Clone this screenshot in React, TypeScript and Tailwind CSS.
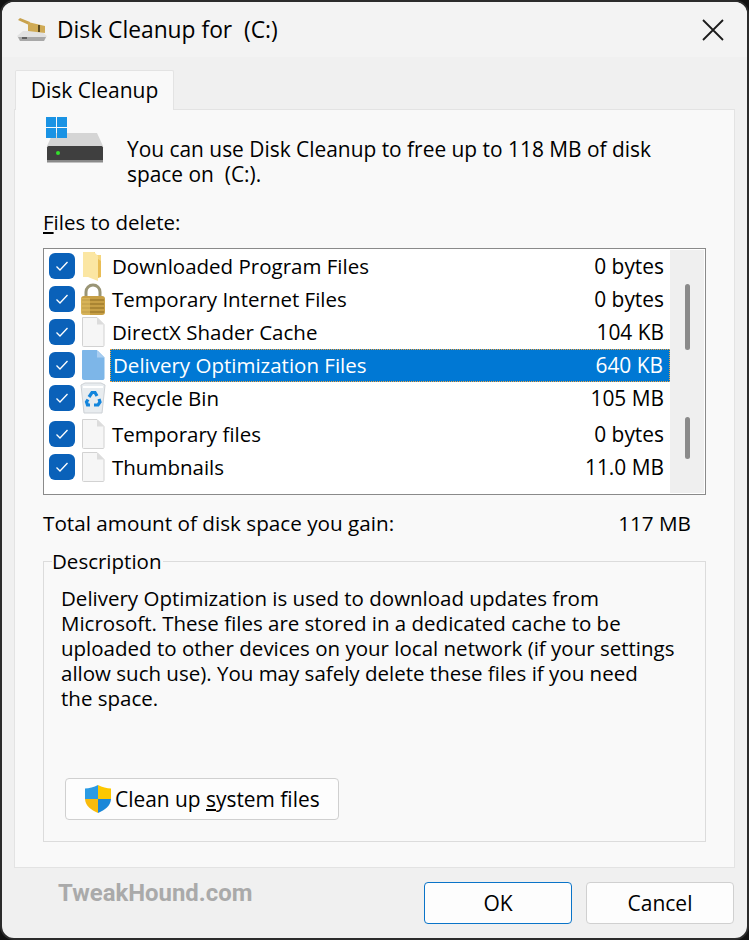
import React from "react";

const font = "font-['Open_Sans','Noto_Sans',sans-serif]";

const FileIcon = ({ blue }: { blue?: boolean }) => (
  <svg width="24" height="30" viewBox="0 0 24 30">
    <path d="M1.5 .5H16L23 7.5V28.5a1 1 0 0 1-1 1H2.5a1 1 0 0 1-1-1Z" fill={blue ? "#7db6e8" : "#f6f6f6"} stroke={blue ? "#7db6e8" : "#d2d2d2"} />
    <path d="M16 .5V7.5H23Z" fill={blue ? "#a9cdf0" : "#dcdcdc"} />
  </svg>
);

const FolderIcon = () => (
  <svg width="24" height="30" viewBox="0 0 24 30">
    <path d="M2 1H14V4H20V26H2Z" fill="#f5d67f" />
    <path d="M2 1H13L17 5V30L7 26H2Z" fill="#fbe6a3" />
    <path d="M17 8L20 10V26L17 27Z" fill="#e9bd55" />
  </svg>
);

const LockIcon = () => (
  <svg width="30" height="34" viewBox="0 0 30 34">
    <path d="M8 16V10a7 7 0 0 1 14 0v6" fill="none" stroke="#9a9575" strokeWidth="3" />
    <rect x="3" y="14" width="24" height="19" rx="3" fill="#c79f45" />
    <path d="M4 18H26M4 22H26M4 26H26M4 30H26" stroke="#8e6c22" strokeWidth="1.2" />
    <path d="M3 16H12V33H6a3 3 0 0 1-3-3Z" fill="#e4c268" opacity=".55" />
  </svg>
);

const BinIcon = () => (
  <svg width="26" height="32" viewBox="0 0 26 32">
    <path d="M1 3L5 1H21L25 3L22 31H4Z" fill="#e8ecef" stroke="#cdd1d5" />
    <path d="M3 5H23" stroke="#ffffff" strokeWidth="2" />
    <g fill="none" stroke="#1385dc" strokeWidth="3.200">
      <path d="M9 15L12 10.500H15L17 14" />
      <path d="M19 17L20 20L18 23H14" />
      <path d="M10 23H7.500L6.500 20L8 17.500" />
    </g>
  </svg>
);

const Check = () => (
  <span className="flex h-[26px] w-[26px] shrink-0 items-center justify-center rounded-[6px] bg-[#0a61b9]">
    <svg width="14" height="12" viewBox="0 0 14 12">
      <path d="M1.500 6.500L5 10L12.500 2" fill="none" stroke="#fff" strokeWidth="1.300" />
    </svg>
  </span>
);

const rows = [
  { name: "Downloaded Program Files", size: "0 bytes", icon: <FolderIcon /> },
  { name: "Temporary Internet Files", size: "0 bytes", icon: <LockIcon /> },
  { name: "DirectX Shader Cache", size: "104 KB", icon: <FileIcon /> },
  { name: "Delivery Optimization Files", size: "640 KB", icon: <FileIcon blue />, selected: true },
  { name: "Recycle Bin", size: "105 MB", icon: <BinIcon /> },
  { name: "Temporary files", size: "0 bytes", icon: <FileIcon />, gap: true },
  { name: "Thumbnails", size: "11.0 MB", icon: <FileIcon /> },
];

const App: React.FC = () => {
  return (
    <div className={`h-[940px] w-[749px] bg-[#111] text-[20.5px] leading-[25px] text-black ${font}`}>
      <div className="flex h-full flex-col overflow-hidden rounded-[14px] border-2 border-[#2b2b2b] bg-[#f0f0f0]">
        {/* title bar */}
        <div className="flex h-[55px] shrink-0 items-center bg-[#f3f3f3] pl-[15px] pr-[23px]">
          <svg width="32" height="26" viewBox="0 0 32 26" className="mr-[8px] shrink-0">
            <path d="M0 19L6 14H24L30 19L27 24H3Z" fill="#e2e2e2" />
            <path d="M1 20H29L27 24H3Z" fill="#a8a8a8" />
            <path d="M5 21H10" stroke="#4a4a4a" strokeWidth="1.500" />
            <path d="M1 3L3 1L13 5L12 8Z" fill="#c8a24e" />
            <path d="M11 5L28 9V16L11 14Z" fill="#cfaa55" />
            <path d="M22 8V15" stroke="#5b4a20" strokeWidth="2" />
          </svg>
          <span className="whitespace-pre text-[22.8px]">Disk Cleanup for  (C:)</span>
          <svg width="22" height="22" viewBox="0 0 22 22" className="ml-auto">
            <path d="M1 1L21 21M21 1L1 21" stroke="#1b1b1b" strokeWidth="1.800" />
          </svg>
        </div>

        {/* tab */}
        <div className="flex h-[52px] shrink-0 items-end pl-[13px]">
          <div className="z-10 -mb-px flex h-[40px] w-[159px] items-center justify-center rounded-t-[2px] border border-b-0 border-[#e3e3e3] bg-[#f9f9f9] text-[21px]">
            Disk Cleanup
          </div>
        </div>

        {/* tab panel */}
        <div className="mx-[12px] flex h-[759px] shrink-0 flex-col border border-[#e3e3e3] bg-[#f9f9f9] px-[28px]">
          <div className="flex h-[87px] shrink-0">
            <svg width="60" height="48" viewBox="0 0 60 48" className="ml-[3px] mt-[7px] shrink-0">
              <path d="M7 16H51L57 29H1Z" fill="#d5d5d5" />
              <rect x="1" y="29" width="56" height="16" rx="1.500" fill="#3f3f3f" />
              <rect x="1" y="43" width="56" height="2.500" fill="#8a8a8a" />
              <circle cx="12" cy="36" r="2" fill="#33e02c" />
              <path d="M0 0H10V10H0ZM11 0H21V10H11ZM0 11H10V21H0ZM11 11H21V21H11Z" fill="#1a93e4" />
            </svg>
            <p className="ml-[21px] mt-[27px] whitespace-pre text-[20.9px]">{"You can use Disk Cleanup to free up to 118 MB of disk\nspace on  (C:)."}</p>
          </div>

          <div className="mt-[13px] h-[25px] shrink-0"><span className="underline underline-offset-2">F</span>iles to delete:</div>

          {/* list */}
          <div className="mt-[13px] flex h-[247px] shrink-0 border border-[#8a8a8a] bg-white pl-[5px]">
            <div className="flex min-w-0 flex-1 flex-col pt-[0.5px]">
              {rows.map((row) => (
                <div key={row.name} className={`flex h-[33px] shrink-0 items-center ${row.gap ? "mt-[3px]" : ""}`}>
                  <Check />
                  <span className="flex w-[35px] shrink-0 justify-center">{row.icon}</span>
                  <div className={`flex h-[33px] flex-1 items-center justify-between pl-[2px] pr-[6px] ${row.selected ? "border border-dotted border-[#f4a640] bg-[#0078d4] text-white" : ""}`}>
                    <span>{row.name}</span>
                    <span className="text-[20.9px]">{row.size}</span>
                  </div>
                </div>
              ))}
            </div>
            <div className="my-px mr-px flex w-[34px] shrink-0 flex-col items-center bg-[#efefef] pt-[34px]">
              <div className="h-[66px] w-[5px] rounded-full bg-[#8a8a8a]" />
              <div className="mt-[67px] h-[42px] w-[5px] rounded-full bg-[#8a8a8a]" />
            </div>
          </div>

          <div className="mt-[16px] flex h-[25px] shrink-0 justify-between pr-[15px] text-[20.7px]">
            <span>Total amount of disk space you gain:</span>
            <span>117 MB</span>
          </div>

          {/* description group */}
          <div className="relative mt-[25px] flex h-[281px] shrink-0 flex-col border border-[#dcdcdc] px-[17px] pt-[24px]">
            <span className="absolute -top-[13px] left-[8px] bg-[#f9f9f9] pr-[2px]">Description</span>
            <p className="whitespace-pre">{"Delivery Optimization is used to download updates from\nMicrosoft. These files are stored in a dedicated cache to be\nuploaded to other devices on your local network (if your settings\nallow such use). You may safely delete these files if you need\nthe space."}</p>
            <button className="ml-[4px] mt-[67px] flex h-[42px] w-[274px] items-center rounded-[4px] border border-[#d0d0d0] bg-[#fdfdfd] pl-[17px] text-[20.9px]">
              <svg width="30" height="30" viewBox="0 0 30 30" className="mr-[2px] shrink-0">
                <path d="M15 1C11 3 6 4.500 2 4.500V15H15Z" fill="#2b9be4" />
                <path d="M15 1C19 3 24 4.500 28 4.500V15H15Z" fill="#fdc800" />
                <path d="M2 15C2.500 22 8 26 15 29V15Z" fill="#f9bb0d" />
                <path d="M28 15C27.500 22 22 26 15 29V15Z" fill="#1a87d8" />
              </svg>
              <span>Clean up <span className="underline underline-offset-2">s</span>ystem files</span>
            </button>
          </div>
        </div>

        {/* footer */}
        <div className="flex flex-1 items-center pl-[56px] pr-[13px]">
          <span className="-mt-[20px] font-['Roboto',sans-serif] text-[23.9px] font-bold text-[#aaaaaa]">TweakHound.com</span>
          <button className="ml-auto h-[42px] w-[148px] rounded-[4px] border border-[#0a74c8] bg-[#fdfdfd] text-[21px]">OK</button>
          <button className="ml-[14px] h-[42px] w-[148px] rounded-[4px] border border-[#d0d0d0] bg-[#fdfdfd] text-[21px]">Cancel</button>
        </div>
      </div>
    </div>
  );
};

export default App;
